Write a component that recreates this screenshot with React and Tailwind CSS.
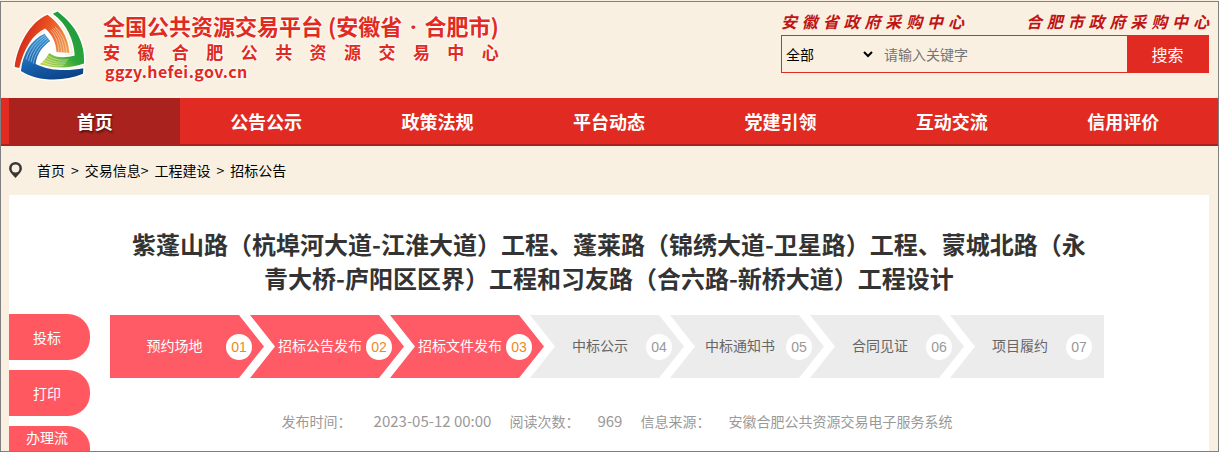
import { Fragment } from "react";

const NAV = ["首页", "公告公示", "政策法规", "平台动态", "党建引领", "互动交流", "信用评价"];

const STEPS = [
  { name: "预约场地", done: true },
  { name: "招标公告发布", done: true },
  { name: "招标文件发布", done: true },
  { name: "中标公示" },
  { name: "中标通知书" },
  { name: "合同见证" },
  { name: "项目履约" },
];

const RED = "M43 200 C50 140 88 64 142 43 C176 66 206 110 208 158 L169 155 C168 128 158 104 135 84 C98 102 72 140 57 203 Z";
const GREEN = "M158 40 L172 33 C228 75 256 130 252 190 C205 207 160 204 118 192 C130 183 140 172 147 158 C170 176 200 172 224 166 C222 120 200 70 158 40 Z";
const BLUE = "M250 204 L249 221 C190 246 110 244 62 212 C67 160 92 118 133 100 L150 122 C125 140 110 162 106 191 C150 213 205 213 250 204 Z";

function Logo() {
  return (
    <svg viewBox="38 29 220 216" className="h-[72px] w-[73px] shrink-0" aria-hidden="true">
      <defs>
        <linearGradient id="lg-red" x1="0" y1="0.2" x2="1" y2="0.6">
          <stop offset="0" stopColor="#c3161b" />
          <stop offset="0.5" stopColor="#e8501f" />
          <stop offset="1" stopColor="#f0a052" />
        </linearGradient>
        <linearGradient id="lg-green" x1="0.9" y1="0.2" x2="0.2" y2="1">
          <stop offset="0" stopColor="#1b9a3c" />
          <stop offset="0.55" stopColor="#2fa53a" />
          <stop offset="1" stopColor="#bcd548" />
        </linearGradient>
        <linearGradient id="lg-blue" x1="0.2" y1="0" x2="0.6" y2="1">
          <stop offset="0" stopColor="#3f9bd6" />
          <stop offset="0.6" stopColor="#1660ac" />
          <stop offset="1" stopColor="#0d4388" />
        </linearGradient>
      </defs>
      <g fill="#fff" stroke="#fff" strokeWidth="8" strokeLinejoin="round">
        <path d={RED} />
        <path d={GREEN} />
        <path d={BLUE} />
        <path d="M135 95 L200 175 L110 190 Z" />
      </g>
      <path d={RED} fill="url(#lg-red)" />
      <path d={GREEN} fill="url(#lg-green)" />
      <path d={BLUE} fill="url(#lg-blue)" />
      <g fill="none" stroke="#fff" strokeWidth="1.6" opacity="0.85">
        <path d="M152 90 C168 108 176 130 176 157" />
        <path d="M156 86 C174 104 183 128 184 157" />
        <path d="M160 83 C180 102 191 128 192 158" />
        <path d="M165 80 C188 102 198 128 200 158" />
        <path d="M136 104 C104 122 84 150 78 178" />
        <path d="M140 108 C110 126 92 152 85 182" />
        <path d="M143 112 C116 130 98 156 92 186" />
        <path d="M147 117 C120 136 104 162 99 190" />
        <path d="M143 166 C160 179 182 182 204 178" />
        <path d="M138 172 C156 186 182 188 200 184" />
        <path d="M132 179 C154 191 176 193 196 190" />
        <path d="M126 186 C150 196 170 198 190 196" />
      </g>
    </svg>
  );
}

function Brand() {
  return (
    <a href="#" className="flex items-start text-[#e02a22] [text-shadow:0_0_2px_#fff,0_0_2px_#fff,0_0_3px_#fff]">
      <span className="mt-2 mr-[17px] ml-1">
        <Logo />
      </span>
      <span className="mt-2 flex flex-col font-bold">
        <span className="text-[22px] leading-[30px] whitespace-pre">
          全国公共资源交易平台 (安徽省 <span className="mx-[3px] font-['Noto_Sans',sans-serif]">·</span> 合肥市)
        </span>
        <span className="text-[17px] leading-[22px] [text-align-last:justify]">安徽合肥公共资源交易中心</span>
        <span className="pl-0.5 text-base leading-4 tracking-wide">ggzy.hefei.gov.cn</span>
      </span>
    </a>
  );
}

function Search() {
  return (
    <div className="w-[428px]">
      <div className="flex h-[33px] items-end justify-between pb-1 text-base leading-5 font-bold text-[#c01414] italic">
        <a href="#" className="w-[183px] [text-align-last:justify]">安徽省政府采购中心</a>
        <a href="#" className="w-[183px] [text-align-last:justify]">合肥市政府采购中心</a>
      </div>
      <form className="flex h-[38px] border border-[#e02a22]" onSubmit={(e) => e.preventDefault()}>
        <select aria-label="搜索范围" className="w-[94px] text-sm text-black">
          <option>全部</option>
        </select>
        <input
          type="text"
          aria-label="关键字"
          placeholder="请输入关键字"
          className="min-w-0 flex-1 px-2 text-sm placeholder:text-[#757575]"
        />
        <button type="submit" className="w-[81px] bg-[#e02a22] text-base text-white">搜索</button>
      </form>
    </div>
  );
}

function Breadcrumb() {
  return (
    <nav className="flex h-12 items-center px-2 text-sm text-black" aria-label="面包屑">
      <svg viewBox="0 0 13 16" className="mr-[15px] h-4 w-[13px]" aria-hidden="true">
        <path
          fill="#3a3638"
          fillRule="evenodd"
          d="M6.5 0 A6.4 6.4 0 0 1 12.9 6.4 C12.9 9.5 9.5 12.5 6.5 16 C3.5 12.5 0.1 9.5 0.1 6.4 A6.4 6.4 0 0 1 6.5 0 Z M6.5 2.6 A3.9 3.9 0 1 0 6.5 10.4 A3.9 3.9 0 1 0 6.5 2.6 Z"
        />
      </svg>
      <a href="#">首页</a>
      <span className="mx-1.5">&gt;</span>
      <a href="#">交易信息</a>
      <span className="mr-1.5">&gt;</span>
      <a href="#">工程建设</a>
      <span className="mx-1.5">&gt;</span>
      <a href="#">招标公告</a>
    </nav>
  );
}

function Step({ index, name, done }) {
  const first = index === 0;
  const last = index === STEPS.length - 1;
  let shape = "[clip-path:polygon(0_0,129px_0,154px_50%,129px_100%,0_100%,25px_50%)]";
  if (first) shape = "[clip-path:polygon(0_0,129px_0,154px_50%,129px_100%,0_100%)]";
  if (last) shape = "[clip-path:polygon(0_0,100%_0,100%_100%,0_100%,25px_50%)]";

  return (
    <li
      className={`flex h-[63px] w-[154px] shrink-0 items-center pr-3 ${first ? "pl-[13px]" : "pl-6"} ${last ? "" : "-mr-3.5"} ${
        done ? "bg-[#ff5b66] text-white" : "bg-[#ececec] text-[#666]"
      } ${shape}`}
    >
      <span className="flex-1 pb-1 text-center text-sm whitespace-nowrap">{name}</span>
      <span
        className={`flex size-[26px] shrink-0 items-center justify-center rounded-full bg-white font-['Liberation_Sans',sans-serif] text-sm ${
          done ? "text-[#ee8a1d]" : "text-[#999]"
        }`}
      >
        0{index + 1}
      </span>
    </li>
  );
}

function Meta() {
  const items = [
    ["发布时间：", <time className="pl-1 text-[15px]">2023-05-12 00:00</time>],
    ["阅读次数：", <span className="text-[15px]">969</span>],
    ["信息来源：", "安徽合肥公共资源交易电子服务系统"],
  ];
  return (
    <p className="mt-8 flex items-baseline justify-center gap-[18px] pl-4 text-sm leading-[22px] text-[#999]">
      {items.map(([label, value]) => (
        <Fragment key={label}>
          <span>{label}</span>
          <span>{value}</span>
        </Fragment>
      ))}
    </p>
  );
}

export default function App() {
  return (
    <div className="h-screen bg-[#f9f0e2] pt-px font-['Noto_Sans_CJK_SC',sans-serif]">
      <div className="flex h-full flex-col overflow-hidden border border-[#808080]">
        <header className="flex h-24 shrink-0 items-start justify-between pr-[9px] pl-2">
          <Brand />
          <Search />
        </header>

        <nav className="shrink-0 border-b-2 border-[#a9221e] bg-[#e02a22] pr-[9px] pl-2">
          <ul className="flex">
            {NAV.map((item, i) => (
              <li key={item} className="flex-1">
                <a
                  href="#"
                  className={`block text-center text-lg leading-[46px] font-bold text-white ${
                    i === 0 ? "bg-[#a9221e] [text-shadow:1px_2px_2px_rgba(0,0,0,0.5)]" : ""
                  }`}
                >
                  {item}
                </a>
              </li>
            ))}
          </ul>
        </nav>

        <div className="shrink-0 pb-px">
          <Breadcrumb />
        </div>

        <div className="mr-[9px] ml-2 flex min-h-0 flex-1 bg-white">
          <aside className="flex w-[81px] shrink-0 flex-col gap-2.5 pt-[119px]">
            {["投标", "打印", "办理流程"].map((label) => (
              <button
                key={label}
                type="button"
                className="h-[46px] w-full shrink-0 rounded-r-[22px] bg-[#ff5860] pr-[21px] pl-4 text-sm leading-[23px] text-white"
              >
                {label}
              </button>
            ))}
          </aside>

          <main className="min-w-0 flex-1 pt-8 pr-[81px]">
            <h1 className="mx-auto max-w-[960px] text-center text-2xl leading-[34px] font-bold text-[#333]">
              紫蓬山路（杭埠河大道-江淮大道）工程、蓬莱路（锦绣大道-卫星路）工程、蒙城北路（永青大桥-庐阳区区界）工程和习友路（合六路-新桥大道）工程设计
            </h1>
            <ol className="mx-auto mt-5 flex max-w-[998px]">
              {STEPS.map((s, i) => (
                <Step key={s.name} index={i} name={s.name} done={s.done} />
              ))}
            </ol>
            <Meta />
          </main>
        </div>
      </div>
    </div>
  );
}
